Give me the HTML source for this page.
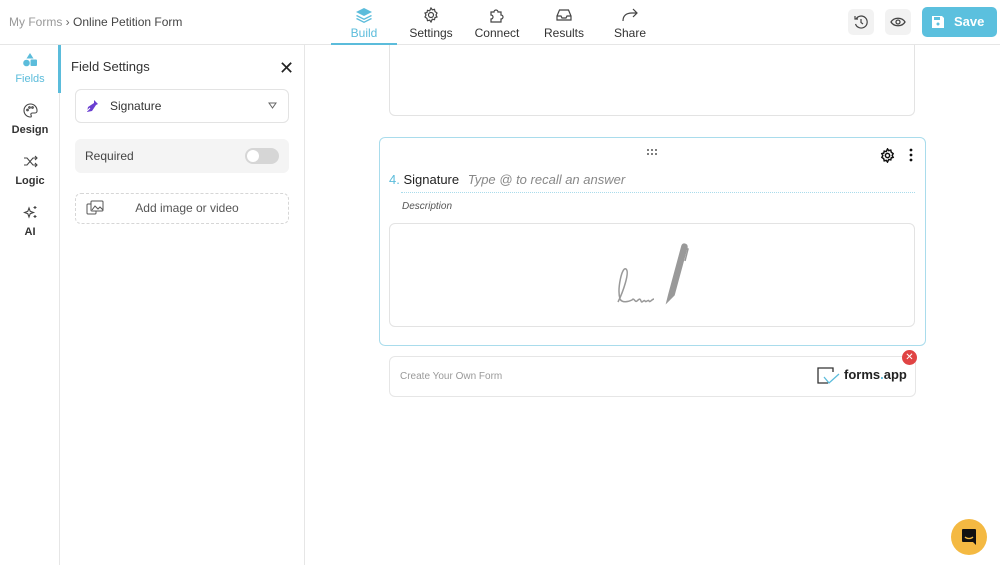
<!DOCTYPE html>
<html><head><meta charset="utf-8"><style>
*{box-sizing:border-box;margin:0;padding:0}
body{width:1000px;height:565px;overflow:hidden;background:#fff;font-family:"Liberation Sans",sans-serif;color:#333;position:relative}
.abs{position:absolute}
.hdr{left:0;top:0;width:1000px;height:45px;border-bottom:1px solid #e6e6e6;background:#fff}
.nav{top:0;height:45px;width:66px;text-align:center;font-size:12px;color:#333}
.nav svg{display:block;margin:7px auto 3px}
.side{font-size:11px;text-align:center;width:60px;left:0}
.side svg{display:block;margin:0 auto 6px}
</style></head><body>
<div class="abs" style="left:389px;top:45px;width:526px;height:71px;border:1px solid #e3e3e3;border-top:none;border-radius:0 0 6px 6px"></div>
<div class="abs hdr"></div>
<div class="abs" style="left:9px;top:15px;font-size:12px;color:#999">My Forms <span style="color:#666">›</span> <span style="color:#444">Online Petition Form</span></div>

<div class="abs nav" style="left:331px;color:#5bbcdb;border-bottom:2px solid #5bbcdb">
<svg width="18" height="16" viewBox="0 0 18 16"><path d="M9 1L17 5L9 9L1 5Z" fill="#5bbcdb"/><path d="M2 8L9 11.5L16 8L17 9L9 13L1 9Z" fill="#5bbcdb"/><path d="M2 11L9 14.5L16 11L17 12L9 16L1 12Z" fill="#5bbcdb"/></svg>Build</div>
<div class="abs nav" style="left:398px"><svg width="16" height="16" viewBox="0 0 16 16" fill="none" stroke="#444" stroke-width="1.2"><circle cx="8" cy="8" r="2.5"/><path d="M8 1l1.3 1.8 2.2-.5.5 2.2L14 6l-1 2 1 2-2 .5-.5 2.2-2.2-.5L8 15l-1.3-1.8-2.2.5-.5-2.2L2 10l1-2-1-2 2-.5.5-2.2 2.2.5z"/></svg>Settings</div>
<div class="abs nav" style="left:464px"><svg width="16" height="16" viewBox="0 0 16 16" fill="none" stroke="#444" stroke-width="1.2"><path d="M2 5h3a2 2 0 114 0h3v3a2 2 0 110 4v3H2v-3a2 2 0 100-4z"/></svg>Connect</div>
<div class="abs nav" style="left:531px"><svg width="16" height="16" viewBox="0 0 16 16" fill="none" stroke="#444" stroke-width="1.2"><path d="M1 9l2.5-6h9L15 9v4H1z M1 9h4l1 2h4l1-2h4"/></svg>Results</div>
<div class="abs nav" style="left:597px"><svg width="18" height="16" viewBox="0 0 18 16" fill="none" stroke="#444" stroke-width="1.2"><path d="M2 14c0-5 3-8 9-8h5M12 2l4 4-4 4"/></svg>Share</div>

<div class="abs" style="left:848px;top:9px;width:26px;height:26px;background:#f2f2f2;border-radius:5px"><svg width="26" height="26" viewBox="0 0 26 26" fill="none" stroke="#444" stroke-width="1.2"><path d="M8 10a6 6 0 11-.5 5M7 7v3h3M13 10v3.5l2 1.5"/></svg></div>
<div class="abs" style="left:885px;top:9px;width:26px;height:26px;background:#f2f2f2;border-radius:5px"><svg width="26" height="26" viewBox="0 0 26 26" fill="none" stroke="#444" stroke-width="1.3"><path d="M6 13c3-5 11-5 14 0c-3 5-11 5-14 0z"/><circle cx="13" cy="13" r="2"/></svg></div>
<div class="abs" style="left:922px;top:7px;width:75px;height:30px;background:#5bc0de;border-radius:5px;color:#fff;font-weight:bold;font-size:13px;line-height:30px;padding-left:32px">Save
<svg class="abs" style="left:9px;top:8px" width="14" height="14" viewBox="0 0 14 14"><path d="M1 1h10l2 2v10H1z" fill="#fff"/><rect x="3" y="2" width="6" height="3" fill="#5bc0de"/><circle cx="7" cy="9" r="1.5" fill="#5bc0de"/></svg></div>

<div class="abs" style="left:59px;top:45px;width:1px;height:520px;background:#e6e6e6"></div>
<div class="abs" style="left:58px;top:45px;width:3px;height:48px;background:#5bbcdb"></div>
<div class="abs" style="left:304px;top:45px;width:1px;height:520px;background:#e6e6e6"></div>
<div class="abs side" style="top:53px;color:#5bbcdb"><svg width="14" height="14" viewBox="0 0 14 14" fill="#5bbcdb"><path d="M7 0l3.5 5.5h-7z"/><circle cx="3.5" cy="10" r="3.3"/><rect x="7.5" y="6.5" width="6.5" height="6.5" rx="1"/></svg>Fields</div>
<div class="abs side" style="top:103px;font-weight:bold;color:#333"><svg width="15" height="15" viewBox="0 0 15 15" fill="none" stroke="#444" stroke-width="1.1"><path d="M7.5 1a6.5 6.5 0 100 13c1 0 1-1 .5-2s0-2 1.5-2H12a2 2 0 002-2A6.5 6.5 0 007.5 1z"/><circle cx="4.5" cy="7" r=".8"/><circle cx="6.5" cy="4.5" r=".8"/><circle cx="9.5" cy="4.5" r=".8"/></svg>Design</div>
<div class="abs side" style="top:154px;font-weight:bold;color:#333"><svg width="15" height="15" viewBox="0 0 15 15" fill="none" stroke="#444" stroke-width="1.1"><path d="M1 4h3l6 7h4M1 11h3l6-7h4M12 2l2 2-2 2M12 9l2 2-2 2"/></svg>Logic</div>
<div class="abs side" style="top:205px;font-weight:bold;color:#333"><svg width="15" height="15" viewBox="0 0 15 15" fill="none" stroke="#444" stroke-width="1.1"><path d="M6 3l1.2 3.3L10.5 7.5 7.2 8.7 6 12 4.8 8.7 1.5 7.5 4.8 6.3z"/><path d="M12 1v3M10.5 2.5h3M12 10v3M10.5 11.5h3"/></svg>AI</div>

<div class="abs" style="left:71px;top:59px;font-size:13px;color:#333">Field Settings</div>
<div class="abs" style="left:279px;top:58px;font-size:18px;color:#222">✕</div>
<div class="abs" style="left:75px;top:89px;width:214px;height:34px;border:1px solid #e3e3e3;border-radius:6px;font-size:12px;line-height:32px;padding-left:34px">Signature
<svg class="abs" style="left:9px;top:9px" width="14" height="14" viewBox="0 0 14 14"><path d="M9 1l4 4-2 1-4 6-5 1 1-5 6-4z" fill="#6a3fd1"/><path d="M2 12l3-3" stroke="#fff" stroke-width="1"/></svg>
<svg class="abs" style="left:192px;top:12px" width="9" height="7" viewBox="0 0 9 7"><path d="M1 1h7L4.5 6z" fill="none" stroke="#666"/></svg></div>
<div class="abs" style="left:75px;top:139px;width:214px;height:34px;background:#f4f4f4;border-radius:6px;font-size:12px;line-height:34px;padding-left:10px;color:#444">Required
<div class="abs" style="left:170px;top:9px;width:34px;height:16px;background:#d6d6d6;border-radius:8px"><div class="abs" style="left:2px;top:2px;width:12px;height:12px;background:#fff;border-radius:50%"></div></div></div>
<div class="abs" style="left:75px;top:193px;width:214px;height:31px;border:1px dashed #d6d6d6;border-radius:6px;font-size:12px;line-height:29px;text-align:center;color:#555;padding-left:10px">Add image or video
<svg class="abs" style="left:10px;top:6px" width="18" height="16" viewBox="0 0 18 16" fill="none" stroke="#555" stroke-width="1"><rect x="1" y="4" width="9" height="10" rx="1"/><rect x="5" y="1" width="12" height="10" rx="1" fill="#fff"/><path d="M6 10l3-4 3 3 2-2 3 3"/></svg></div>

<div class="abs" style="left:379px;top:137px;width:547px;height:209px;border:1.5px solid #a9dcec;border-radius:6px"></div>
<svg class="abs" style="left:646px;top:148px" width="12" height="8" viewBox="0 0 12 8" fill="#555"><circle cx="2" cy="2" r="1"/><circle cx="6" cy="2" r="1"/><circle cx="10" cy="2" r="1"/><circle cx="2" cy="6" r="1"/><circle cx="6" cy="6" r="1"/><circle cx="10" cy="6" r="1"/></svg>
<svg class="abs" style="left:880px;top:148px" width="15" height="15" viewBox="0 0 16 16" fill="none" stroke="#111" stroke-width="1.6"><circle cx="8" cy="8" r="2.3"/><path d="M8 1l1.3 1.8 2.2-.5.5 2.2L14 6l-1 2 1 2-2 .5-.5 2.2-2.2-.5L8 15l-1.3-1.8-2.2.5-.5-2.2L2 10l1-2-1-2 2-.5.5-2.2 2.2.5z"/></svg>
<svg class="abs" style="left:909px;top:148px" width="4" height="14" viewBox="0 0 4 14" fill="#111"><circle cx="2" cy="2" r="1.4"/><circle cx="2" cy="7" r="1.4"/><circle cx="2" cy="12" r="1.4"/></svg>
<div class="abs" style="left:389px;top:172px;font-size:13px;color:#222"><span style="color:#5bbcdb">4.</span> Signature <i style="color:#888;margin-left:5px">Type @ to recall an answer</i></div>
<div class="abs" style="left:401px;top:192px;width:514px;border-top:1.5px dotted #a9dcec"></div>
<div class="abs" style="left:402px;top:201px;font-size:10px;font-style:italic;color:#555">Description</div>
<div class="abs" style="left:389px;top:223px;width:526px;height:104px;border:1px solid #e3e3e3;border-radius:6px"></div>
<svg class="abs" style="left:610px;top:240px" width="82" height="70" viewBox="0 0 82 70" fill="none" stroke="#999" stroke-width="1.5"><path d="M8 62c5-10 12-30 8-33s-9 20-6 30c2 4 8 3 12 1 2-3 3 3 5 1s3-3 4 0 3-2 4 0 3-2 4 0 3-2 5-2"/><path d="M57 62l2-8 13-48c1-3 5-2 5 1l-13 48z" fill="#999"/><path d="M74 8l4 1-3 12" /></svg>
<div class="abs" style="left:389px;top:356px;width:527px;height:41px;border:1px solid #e6e6e6;border-radius:6px;font-size:10px;color:#999;line-height:40px;padding-left:10px">Create Your Own Form</div>
<svg class="abs" style="left:816px;top:365px" width="26" height="22" viewBox="0 0 26 22" fill="none" stroke-width="1.3"><path d="M12 18H2V3h15v4" stroke="#333"/><path d="M8 12l5 6 10-9" stroke="#5bbcdb"/></svg>
<div class="abs" style="left:844px;top:367px;font-size:13px;font-weight:bold;color:#222">forms<span style="color:#5bbcdb">.</span>app</div>
<div class="abs" style="left:902px;top:350px;width:15px;height:15px;border-radius:50%;background:#e04444;color:#fff;font-size:10px;text-align:center;line-height:15px">✕</div>
<div class="abs" style="left:951px;top:519px;width:36px;height:36px;border-radius:50%;background:#f4b942"><svg style="position:absolute;left:10px;top:9px" width="16" height="18" viewBox="0 0 16 18"><path d="M2 1h12a1 1 0 011 1v15l-3-3H2a1 1 0 01-1-1V2a1 1 0 011-1z" fill="#111"/><path d="M4 9c2 2 6 2 8 0" stroke="#f4b942" stroke-width="1.3" fill="none"/></svg></div>
</body></html>
